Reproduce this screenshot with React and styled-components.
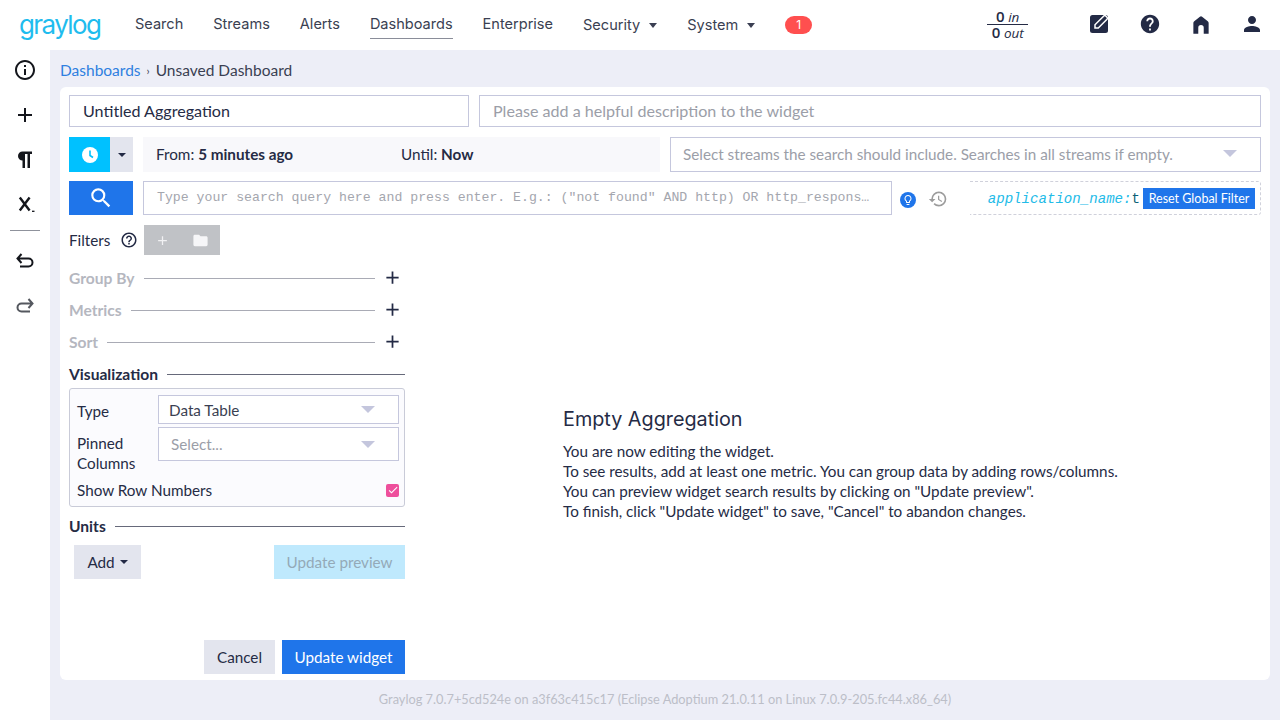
import styled, { createGlobalStyle } from 'styled-components'
import {
  MdInfoOutline,
  MdAdd,
  MdSearch,
  MdFolder,
  MdHistory,
  MdPerson,
  MdHelp,
  MdHelpOutline,
  MdLightbulbOutline,
  MdCheck,
} from 'react-icons/md'

const navItems = ['Search', 'Streams', 'Alerts', 'Dashboards', 'Enterprise']

export default function App() {
  return (
    <Page>
      <GlobalStyle />
      <TopNav>
        <Logo>graylog</Logo>
        <NavLinks>
          {navItems.map((item) => (
            <NavLink key={item} $active={item === 'Dashboards'}>
              {item}
            </NavLink>
          ))}
          <MenuLink>
            Security <NavCaret />
          </MenuLink>
          <MenuLink>
            System <NavCaret />
          </MenuLink>
          <Badge>1</Badge>
        </NavLinks>
        <Throughput>
          <span>
            <b>0</b> <i>in</i>
          </span>
          <span>
            <b>0</b> <i>out</i>
          </span>
        </Throughput>
        <NavIcons>
          <svg width="24" height="24" viewBox="0 0 24 24">
            <rect x="3" y="3" width="18" height="18" rx="2.500" fill="#232a45" />
            <path d="M8 16v-3.300L16.800 4a1.400 1.400 0 0 1 2 0l1.200 1.200a1.400 1.400 0 0 1 0 2L11.300 16z" fill="#232a45" stroke="#fff" strokeWidth="1.500" />
          </svg>
          <MdHelp size={22} color="#232a45" />
          <svg width="24" height="24" viewBox="1 1 22 22" fill="#232a45">
            <path d="M5 21v-10a2 2 0 0 1 .8-1.600L11 5.300a1.600 1.600 0 0 1 2 0l5.200 4.100a2 2 0 0 1 .8 1.600v10h-4.500v-5.500a2.500 2.500 0 0 0-5 0V21z" />
          </svg>
          <MdPerson size={24} color="#232a45" />
        </NavIcons>
      </TopNav>

      <Body>
        <SideBar>
          <SideIcon>
            <MdInfoOutline size={24} />
          </SideIcon>
          <SideIcon>
            <MdAdd size={24} />
          </SideIcon>
          <SideIcon>
            <svg width="24" height="24" viewBox="0 0 24 24" fill="#14161c">
              <path d="M9.500 20v-7.500a4.500 4.500 0 0 1 0-9H19v2.500h-2V20h-2.500V6h-2.500v14z" />
            </svg>
          </SideIcon>
          <SideIcon>
            <svg width="24" height="24" viewBox="0 0 24 24" fill="none" stroke="#14161c">
              <path d="M6.800 4.500l9.800 13M16.600 4.500l-9.800 13" strokeWidth="2.400" />
              <path d="M19 18.300h2.500" strokeWidth="1.300" />
            </svg>
          </SideIcon>
          <SideDivider />
          <SideIcon>
            <svg width="24" height="24" viewBox="0 0 24 24" fill="none" stroke="#14161c" strokeWidth="2">
              <path d="M7 18.500h8.500a4 4 0 0 0 0-8H4.500M8.500 6l-4 4.500 4 4.500" />
            </svg>
          </SideIcon>
          <SideIcon>
            <svg width="24" height="24" viewBox="0 0 24 24" fill="none" stroke="#55585f" strokeWidth="2">
              <path d="M17 18.500H8.500a4 4 0 0 1 0-8h11M15.500 6l4 4.500-4 4.500" />
            </svg>
          </SideIcon>
        </SideBar>

        <Main>
          <Breadcrumb>
            <CrumbLink>Dashboards</CrumbLink>
            <CrumbSep>›</CrumbSep>
            <span>Unsaved Dashboard</span>
          </Breadcrumb>

          <Panel>
            <TitleRow>
              <TitleInput>Untitled Aggregation</TitleInput>
              <DescriptionInput>Please add a helpful description to the widget</DescriptionInput>
            </TitleRow>

            <TimeRow>
              <TimeButtons>
                <ClockButton>
                  <svg width="18" height="18" viewBox="0 0 18 18">
                    <circle cx="9" cy="9" r="8" fill="#fff" />
                    <path d="M9 4.500V9.500l3 2" fill="none" stroke="#00c1ff" strokeWidth="1.600" />
                  </svg>
                </ClockButton>
                <CaretButton>
                  <Caret $color="#232a45" />
                </CaretButton>
              </TimeButtons>
              <TimeRange>
                <TimeFrom>
                  From: <b>5 minutes ago</b>
                </TimeFrom>
                <span>
                  Until: <b>Now</b>
                </span>
              </TimeRange>
              <StreamSelect>
                <Placeholder>Select streams the search should include. Searches in all streams if empty.</Placeholder>
                <Caret $color="#c4c6dd" $big />
              </StreamSelect>
            </TimeRow>

            <QueryRow>
              <SearchButton>
                <MdSearch size={26} color="#fff" />
              </SearchButton>
              <QueryInput>Type your search query here and press enter. E.g.: ("not found" AND http) OR http_respons…</QueryInput>
              <BulbIcon>
                <MdLightbulbOutline size={12} color="#fff" />
              </BulbIcon>
              <HistoryIcon>
                <MdHistory size={20} color="#9c9c9c" />
              </HistoryIcon>
              <GlobalFilter>
                <FilterQuery>
                  application_name:<FilterValue>t</FilterValue>
                </FilterQuery>
                <ResetButton>Reset Global Filter</ResetButton>
              </GlobalFilter>
            </QueryRow>

            <FilterRow>
              <FilterLabel>Filters</FilterLabel>
              <MdHelpOutline size={18} color="#232a45" />
              <FilterButtons>
                <MdAdd size={15} color="#f1f1f3" />
                <MdFolder size={17} color="#f6f6f8" />
              </FilterButtons>
            </FilterRow>

            <Columns>
              <Controls>
                <MutedSection>
                  <span>Group By</span>
                  <Line />
                  <PlusIcon size={21} />
                </MutedSection>
                <MutedSection>
                  <span>Metrics</span>
                  <Line />
                  <PlusIcon size={21} />
                </MutedSection>
                <MutedSection>
                  <span>Sort</span>
                  <Line />
                  <PlusIcon size={21} />
                </MutedSection>

                <SectionHead>
                  <span>Visualization</span>
                  <DarkLine />
                </SectionHead>
                <VizBox>
                  <VizRow>
                    <VizLabel>Type</VizLabel>
                    <VizSelect $height={29}>
                      <span>Data Table</span>
                      <Caret $color="#c4c6dd" $big />
                    </VizSelect>
                  </VizRow>
                  <VizRow>
                    <VizLabel>
                      Pinned
                      <br />
                      Columns
                    </VizLabel>
                    <VizSelect $height={34} $muted>
                      <Placeholder>Select...</Placeholder>
                      <Caret $color="#c4c6dd" $big />
                    </VizSelect>
                  </VizRow>
                  <CheckRow>
                    <span>Show Row Numbers</span>
                    <CheckBox>
                      <MdCheck size={12} color="#fff" />
                    </CheckBox>
                  </CheckRow>
                </VizBox>

                <UnitsHead>
                  <span>Units</span>
                  <DarkLine />
                </UnitsHead>
                <UnitsRow>
                  <AddButton>
                    Add <Caret $color="#232a45" />
                  </AddButton>
                  <PreviewButton>Update preview</PreviewButton>
                </UnitsRow>

                <SaveRow>
                  <CancelButton>Cancel</CancelButton>
                  <SaveButton>Update widget</SaveButton>
                </SaveRow>
              </Controls>

              <EmptyState>
                <h2>Empty Aggregation</h2>
                <p>You are now editing the widget.</p>
                <p>To see results, add at least one metric. You can group data by adding rows/columns.</p>
                <p>You can preview widget search results by clicking on "Update preview".</p>
                <p>To finish, click "Update widget" to save, "Cancel" to abandon changes.</p>
              </EmptyState>
            </Columns>
          </Panel>

          <Footer>Graylog 7.0.7+5cd524e on a3f63c415c17 (Eclipse Adoptium 21.0.11 on Linux 7.0.9-205.fc44.x86_64)</Footer>
        </Main>
      </Body>
    </Page>
  )
}

const GlobalStyle = createGlobalStyle`
  html, body {
    margin: 0;
    padding: 0;
  }
  body {
    font-family: Lato, "Noto Sans", sans-serif;
    font-size: 15.250px;
    color: #252b45;
    background: #fff;
  }
  * {
    box-sizing: border-box;
  }
`

const Page = styled.div`
  width: 1280px;
  height: 720px;
  display: flex;
  flex-direction: column;
  overflow: hidden;
`

const TopNav = styled.div`
  height: 50px;
  flex: none;
  display: flex;
  align-items: center;
  padding-left: 19px;
  background: #fff;
`

const Logo = styled.div`
  width: 116px;
  margin-top: -1px;
  font-family: Inter, sans-serif;
  font-size: 26px;
  font-weight: 400;
  letter-spacing: -1.600px;
  color: #1fbcee;
`

const NavLinks = styled.div`
  display: flex;
  align-items: center;
  gap: 30px;
  height: 100%;
  font-family: Inter, sans-serif;
  font-size: 14.550px;
  color: #3a3f52;
`

const NavLink = styled.div`
  display: flex;
  align-items: center;
  height: 28px;
  margin-top: ${(p) => (p.$active ? '0' : '-2px')};
  padding-bottom: ${(p) => (p.$active ? '2px' : '0')};
  white-space: nowrap;
  border-bottom: ${(p) => (p.$active ? '1px solid #8a8d99' : 'none')};
`

const MenuLink = styled(NavLink)`
  gap: 7px;
  margin-top: 0;
`

const NavCaret = styled.span`
  width: 0;
  height: 0;
  margin-left: 2px;
  border-left: 4px solid transparent;
  border-right: 4px solid transparent;
  border-top: 5px solid #3a3f52;
`

const Badge = styled.div`
  width: 27px;
  height: 18px;
  border-radius: 9px;
  background: #ff4f4f;
  color: #fff;
  font-size: 12px;
  line-height: 18px;
  text-align: center;
`

const Throughput = styled.div`
  width: 41px;
  margin-left: 175px;
  margin-top: -1px;
  display: flex;
  flex-direction: column;
  align-items: center;
  font-family: "Open Sans", sans-serif;
  font-size: 13.500px;
  line-height: 14px;
  color: #252b45;

  span:first-child {
    width: 100%;
    text-align: center;
    border-bottom: 1px solid #252b45;
  }
  b {
    font-size: 15px;
    font-weight: 600;
  }
  i {
    font-weight: 400;
  }
`

const NavIcons = styled.div`
  display: flex;
  align-items: center;
  gap: 27px;
  margin-left: 59px;
  margin-top: -2px;

  svg {
    width: 24px;
    flex: none;
  }
`

const Body = styled.div`
  flex: 1;
  display: flex;
  min-height: 0;
`

const SideBar = styled.div`
  width: 50px;
  flex: none;
  display: flex;
  flex-direction: column;
  align-items: center;
  background: #fff;
`

const SideIcon = styled.div`
  height: 45px;
  width: 100%;
  flex: none;
  display: flex;
  align-items: center;
  justify-content: center;
  color: #14161c;

  &:first-child {
    height: 40px;
    margin-bottom: 2px;
  }
`

const SideDivider = styled.div`
  width: 30px;
  height: 1px;
  flex: none;
  margin: 3px 0 6px;
  background: #8f929c;
`

const Main = styled.div`
  flex: 1;
  display: flex;
  flex-direction: column;
  min-width: 0;
  padding: 0 10px;
  background: #edeef7;
`

const Breadcrumb = styled.div`
  height: 37px;
  flex: none;
  display: flex;
  align-items: center;
  font-size: 15.500px;
  color: #3a3f52;
  padding-top: 3px;
`

const CrumbLink = styled.span`
  color: #2f7fe0;
`

const CrumbSep = styled.span`
  margin: 0 6px 0 6px;
  font-size: 11px;
`

const Panel = styled.div`
  height: 593px;
  flex: none;
  display: flex;
  flex-direction: column;
  padding: 8px 9px 6px;
  border-radius: 6px;
  background: #fff;
`

const TitleRow = styled.div`
  display: flex;
  gap: 10px;
  height: 32px;
  flex: none;
`

const Field = styled.div`
  display: flex;
  align-items: center;
  padding: 0 13px 2px;
  border: 1px solid #c5c7dd;
  background: #fff;
  font-size: 16.100px;
`

const TitleInput = styled(Field)`
  width: 400px;
  flex: none;
`

const DescriptionInput = styled(Field)`
  flex: 1;
  color: #9b9ea8;
`

const TimeRow = styled.div`
  display: flex;
  height: 35px;
  flex: none;
  margin-top: 10px;
`

const TimeButtons = styled.div`
  width: 64px;
  flex: none;
  display: flex;
`

const ClockButton = styled.div`
  width: 41px;
  display: flex;
  align-items: center;
  justify-content: center;
  background: #00c1ff;
`

const CaretButton = styled.div`
  width: 23px;
  display: flex;
  align-items: center;
  justify-content: center;
  background: #e3e5ee;
`

const Caret = styled.span`
  display: inline-block;
  width: 0;
  height: 0;
  border-left: ${(p) => (p.$big ? 7 : 4)}px solid transparent;
  border-right: ${(p) => (p.$big ? 7 : 4)}px solid transparent;
  border-top: ${(p) => (p.$big ? 7 : 4)}px solid ${(p) => p.$color};
`

const TimeRange = styled.div`
  width: 517px;
  flex: none;
  margin-left: 10px;
  display: flex;
  align-items: center;
  padding: 0 0 2px 13px;
  background: #f8f8fb;

  b {
    font-weight: 700;
  }
`

const TimeFrom = styled.span`
  width: 245px;
`

const StreamSelect = styled(Field)`
  flex: 1;
  margin-left: 10px;
  padding-left: 12px;
  padding-right: 23px;
  justify-content: space-between;
  font-size: 15.250px;
`

const Placeholder = styled.span`
  color: #9b9ea8;
`

const QueryRow = styled.div`
  display: flex;
  align-items: center;
  height: 34px;
  flex: none;
  margin-top: 9px;
`

const SearchButton = styled.div`
  width: 64px;
  height: 34px;
  flex: none;
  display: flex;
  align-items: center;
  justify-content: center;
  background: #1f75ea;
`

const QueryInput = styled.div`
  width: 749px;
  height: 34px;
  flex: none;
  margin-left: 10px;
  padding-left: 13px;
  border: 1px solid #c5c7dd;
  font-family: "Liberation Mono", monospace;
  font-size: 13.200px;
  line-height: 32px;
  color: #a4a6ae;
  white-space: nowrap;
  overflow: hidden;
`

const BulbIcon = styled.div`
  width: 16px;
  height: 16px;
  flex: none;
  margin: 3px 0 0 8px;
  display: flex;
  align-items: center;
  justify-content: center;
  border-radius: 50%;
  background: #1f75ea;
`

const HistoryIcon = styled.div`
  flex: none;
  display: flex;
  margin: 1px 0 0 12px;
`

const GlobalFilter = styled.div`
  flex: 1;
  height: 34px;
  margin-left: 22px;
  display: flex;
  align-items: center;
  justify-content: flex-end;
  padding-right: 5px;
  border: 1px dashed #d0d1db;
  border-left: none;
  border-radius: 0 3px 3px 0;
`

const FilterQuery = styled.span`
  margin: 1px 3px 0 0;
  font-family: "Liberation Mono", monospace;
  font-size: 14.100px;
  font-style: italic;
  color: #22bbe8;
`

const FilterValue = styled.span`
  font-style: normal;
  color: #0d5f77;
`

const ResetButton = styled.div`
  width: 112px;
  height: 21px;
  background: #1f75ea;
  color: #fff;
  font-size: 12.500px;
  line-height: 21px;
  text-align: center;
`

const FilterRow = styled.div`
  display: flex;
  align-items: center;
  height: 30px;
  flex: none;
  margin-top: 10px;
`

const FilterLabel = styled.span`
  width: 51px;
  flex: none;
`

const FilterButtons = styled.div`
  width: 76px;
  height: 30px;
  margin-left: 6px;
  display: flex;
  align-items: center;
  justify-content: space-between;
  padding: 0 11px;
  background: #c0c2c6;
`

const Columns = styled.div`
  flex: 1;
  display: flex;
  min-height: 0;
`

const Controls = styled.div`
  width: 336px;
  flex: none;
  display: flex;
  flex-direction: column;
`

const MutedSection = styled.div`
  display: flex;
  align-items: center;
  height: 32px;
  padding-right: 2px;
  font-size: 15.600px;
  font-weight: 700;
  color: #b5b7bf;

  &:first-child {
    margin-top: 7px;
  }
`

const PlusIcon = styled(MdAdd)`
  margin-top: -2px;
  color: #232a45;
`

const Line = styled.div`
  flex: 1;
  height: 1px;
  margin: 0 7px 0 9px;
  background: #a9abb5;
`

const SectionHead = styled.div`
  display: flex;
  align-items: center;
  gap: 9px;
  height: 32px;
  flex: none;
  font-size: 15.600px;
  font-weight: 700;
  color: #252b45;
`

const UnitsHead = styled(SectionHead)`
  margin-top: 3px;
`

const DarkLine = styled.div`
  flex: 1;
  height: 1px;
  background: #66697a;
`

const VizBox = styled.div`
  margin-top: -2px;
  height: 119px;
  flex: none;
  padding: 6px 5px 0 7px;
  border: 1px solid #c9cbd8;
  border-radius: 3px;
  background: #fbfbfe;
`

const VizRow = styled.div`
  display: flex;
  gap: 21px;
  margin-bottom: 3px;
`

const VizLabel = styled.div`
  width: 60px;
  flex: none;
  padding-top: 6px;
  line-height: 20px;
`

const VizSelect = styled.div`
  flex: 1;
  height: ${(p) => p.$height}px;
  display: flex;
  align-items: center;
  justify-content: space-between;
  padding: 0 23px 0 ${(p) => (p.$muted ? 12 : 10)}px;
  border: 1px solid #c5c7dd;
  background: #fff;
  color: #3a3f52;
`

const CheckRow = styled.div`
  display: flex;
  align-items: center;
  justify-content: space-between;
  margin-top: 7px;
  line-height: 20px;
`

const CheckBox = styled.div`
  width: 13px;
  height: 13px;
  display: flex;
  align-items: center;
  justify-content: center;
  border-radius: 2px;
  background: #ee4f9c;
`

const UnitsRow = styled.div`
  display: flex;
  justify-content: space-between;
  margin-top: 3px;
  padding-left: 5px;
`

const AddButton = styled.div`
  width: 67px;
  height: 34px;
  display: flex;
  align-items: center;
  justify-content: center;
  gap: 5px;
  background: #e3e5ee;
`

const PreviewButton = styled.div`
  width: 131px;
  height: 34px;
  background: #bfe9fd;
  color: #94a9b8;
  line-height: 34px;
  text-align: center;
`

const SaveRow = styled.div`
  margin-top: auto;
  display: flex;
  justify-content: flex-end;
  gap: 7px;
`

const CancelButton = styled.div`
  width: 71px;
  height: 34px;
  background: #e3e5ee;
  line-height: 34px;
  text-align: center;
`

const SaveButton = styled.div`
  width: 123px;
  height: 34px;
  background: #1f75ea;
  color: #fff;
  line-height: 34px;
  text-align: center;
`

const EmptyState = styled.div`
  padding: 152px 0 0 158px;
  line-height: 20px;

  h2 {
    margin: 0 0 10px;
    font-family: Inter, sans-serif;
    font-size: 19.800px;
    font-weight: 400;
    line-height: 24px;
  }
  p {
    margin: 0;
  }
`

const Footer = styled.div`
  flex: 1;
  display: flex;
  align-items: center;
  justify-content: center;
  padding-bottom: 2px;
  font-size: 12.800px;
  color: #bcbec8;
`
